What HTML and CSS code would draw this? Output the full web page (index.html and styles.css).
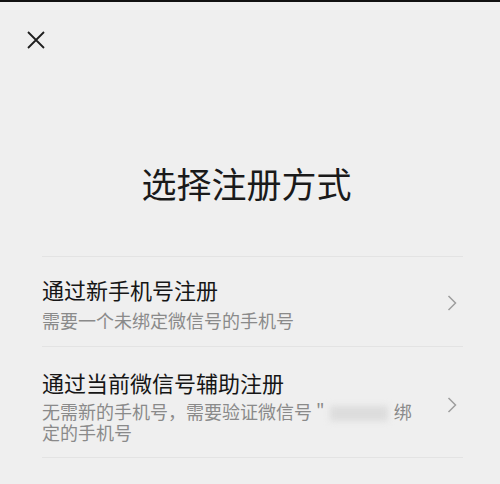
FILE: index.html
```html
<!DOCTYPE html>
<html lang="zh-CN">
<head>
<meta charset="utf-8">
<link rel="stylesheet" href="styles.css">
</head>
<body>
<div class="screen">
  <header class="topbar">
    <svg class="close" width="18" height="18" viewBox="0 0 18 18"><path d="M1 1 L17 17 M17 1 L1 17" stroke="#1e1e1e" stroke-width="1.8" fill="none"/></svg>
  </header>
  <h1 class="title">选择注册方式</h1>
  <ul class="options">
    <li class="option">
      <div class="text">
        <div class="opt-title">通过新手机号注册</div>
        <div class="opt-desc">需要一个未绑定微信号的手机号</div>
      </div>
      <svg class="chev" width="10" height="16" viewBox="0 0 10 16"><path d="M1.5 1 L8.5 8 L1.5 15" stroke="#9e9e9e" stroke-width="1.5" fill="none"/></svg>
    </li>
    <li class="option">
      <div class="text">
        <div class="opt-title">通过当前微信号辅助注册</div>
        <div class="opt-desc">无需新的手机号，需要验证微信号 "<span class="blur"></span> 绑<br>定的手机号</div>
      </div>
      <svg class="chev" width="10" height="16" viewBox="0 0 10 16"><path d="M1.5 1 L8.5 8 L1.5 15" stroke="#9e9e9e" stroke-width="1.5" fill="none"/></svg>
    </li>
  </ul>
</div>
</body>
</html>
```
FILE: styles.css
```css
html, body {
  margin: 0;
  padding: 0;
  background: #efefef;
}
.screen {
  width: 500px;
  height: 484px;
  border-top: 2px solid #111;
  box-sizing: border-box;
  font-family: "Noto Sans CJK SC", "Noto Sans", sans-serif;
  color: #1a1a1a;
  overflow: hidden;
}
.topbar {
  height: 160px;
  padding: 29px 0 0 27px;
  box-sizing: border-box;
}
.close {
  display: block;
}
.title {
  margin: 0;
  padding-right: 7px;
  font-size: 35px;
  line-height: 42px;
  font-weight: 400;
  text-align: center;
  letter-spacing: 0;
}
.options {
  list-style: none;
  margin: 52px 37px 0 42px;
  padding: 0;
  border-bottom: 1px solid #e3e3e3;
}
.option {
  display: flex;
  align-items: center;
  border-top: 1px solid #e3e3e3;
  padding: 17px 0 15px 0;
}
.option + .option {
  padding-top: 20px;
  padding-bottom: 14px;
}
.text {
  width: 382px;
  flex: none;
}
.opt-title {
  font-size: 22px;
  line-height: 30px;
  color: #161616;
}
.opt-desc {
  margin-top: 6px;
  font-size: 18px;
  line-height: 21px;
  color: #8a8a8a;
}
.option + .option .opt-desc {
  margin-top: 4px;
}
.blur {
  display: inline-block;
  width: 58px;
  height: 15px;
  margin: 0 2px 0 5px;
  vertical-align: -2px;
  background: #dcdcdc;
  filter: blur(3px);
}
.chev {
  margin-left: auto;
  margin-right: 6px;
  display: block;
}
```
